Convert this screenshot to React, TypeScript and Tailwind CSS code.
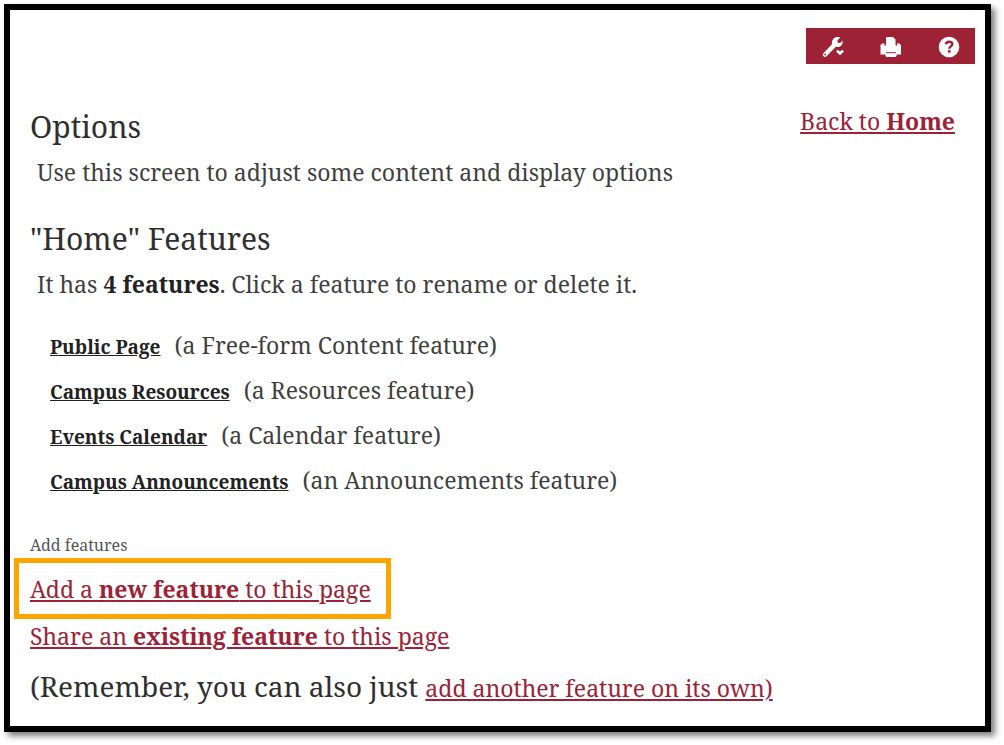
import type { ReactNode } from "react";

const features = [
  { name: "Public Page", kind: "(a Free-form Content feature)" },
  { name: "Campus Resources", kind: "(a Resources feature)" },
  { name: "Events Calendar", kind: "(a Calendar feature)" },
  { name: "Campus Announcements", kind: "(an Announcements feature)" },
];

function ToolButton({ label, children }: { label: string; children: ReactNode }) {
  return (
    <button type="button" aria-label={label} className="cursor-pointer">
      <svg viewBox="0 0 22 22" className="size-[22px]" fill="none">
        {children}
      </svg>
    </button>
  );
}

function Toolbar() {
  return (
    <div className="flex h-9 items-center gap-9 bg-[#9d2235] pt-0.5 pr-[15px] pl-4 text-white">
      <ToolButton label="Page options">
        <path
          d="M3 18.700 12 9.400"
          stroke="currentColor"
          strokeWidth="4.400"
          strokeLinecap="round"
        />
        <path
          d="M18.200 1.400 15.400 4.400l.4 2.300 2.300.4 2.400-2.500c.5 2.700-.5 5-2.500 5.900-1.500.7-3 .6-4.300.1L10.200 8c-.7-2-.2-3.900 1.200-5.300 1.800-1.800 4.500-2.200 6.800-1.300Z"
          fill="currentColor"
        />
        <circle cx="3.200" cy="18.500" r="0.900" fill="#9d2235" />
        <path d="m15 14.600 3 2.800 3-2.800" stroke="currentColor" strokeWidth="2.600" />
      </ToolButton>
      <ToolButton label="Print">
        <path
          d="M6.500 1h6.500l2.500 2.500v5.500l1.500 1V7.500h2.500l1.500 1.500v9.500h-4.500v1.500l-1 1h-9l-1-1v-1.500H.5V9L2 7.500h2.500V10l1.500-1V1.500Z"
          fill="currentColor"
        />
        <path d="M6 16.700h10" stroke="#9d2235" strokeWidth="1" />
      </ToolButton>
      <ToolButton label="Help">
        <circle cx="11" cy="11" r="10.300" fill="currentColor" />
        <path
          d="M7.800 8.300c.3-1.800 1.500-2.600 3.300-2.600 1.900 0 3.200 1 3.200 2.500 0 2.100-3 2.200-3 4.500"
          stroke="#9d2235"
          strokeWidth="2.400"
        />
        <path d="M10 14.200h2.600v2.500H10Z" fill="#9d2235" />
      </ToolButton>
    </div>
  );
}

export default function App() {
  return (
    <div className="bg-white pt-1 pr-[13px] pb-[13px] pl-1 font-['Noto_Serif','DejaVu_Serif',serif] text-[23px] leading-8 text-[#3f3f3f]">
      <main className="border-6 border-black bg-white pt-[18px] pr-[10px] pb-[18px] pl-5 shadow-[4px_4px_6px_rgba(0,0,0,0.5)]">
        <div className="flex justify-end">
          <Toolbar />
        </div>

        <header className="mt-[41px] flex items-start justify-between pr-5">
          <h1 className="text-[30px] leading-11 text-[#2f2f2f]">Options</h1>
          <a href="#home" className="text-[#9d2235] underline">
            Back to <b>Home</b>
          </a>
        </header>
        <p className="mt-[7px] pl-[7px]">
          Use this screen to adjust some content and display options
        </p>

        <h2 className="mt-[29px] text-[30px] leading-11 text-[#2f2f2f]">
          "Home" Features
        </h2>
        <p className="mt-[7px] pl-[7px]">
          It has <b className="text-[#222]">4 features</b>. Click a feature to
          rename or delete it.
        </p>

        <ul className="mt-[23px] pl-5">
          {features.map((feature) => (
            <li key={feature.name} className="flex h-[45px] items-baseline gap-[14px] leading-[45px]">
              <a
                href="#feature"
                className="text-[19px] font-bold text-[#222] underline"
              >
                {feature.name}
              </a>
              <span>{feature.kind}</span>
            </li>
          ))}
        </ul>

        <h3 className="mt-[30px] text-[16px] leading-6 text-[#555]">
          Add features
        </h3>
        <div className="mt-px -ml-4 w-fit border-5 border-[#ffa500] pt-[10px] pr-[15px] pb-[9px] pl-[11px]">
          <a href="#new" className="text-[#9d2235] underline">
            Add a <b>new feature</b> to this page
          </a>
        </div>
        <p className="mt-px">
          <a href="#existing" className="text-[#9d2235] underline">
            Share an <b>existing feature</b> to this page
          </a>
        </p>
        <p className="mt-[14px] text-[28px] leading-10 text-[#2f2f2f]">
          (Remember, you can also just{" "}
          <a href="#own" className="text-[23px] text-[#9d2235] underline">
            add another feature on its own)
          </a>
        </p>
      </main>
    </div>
  );
}
